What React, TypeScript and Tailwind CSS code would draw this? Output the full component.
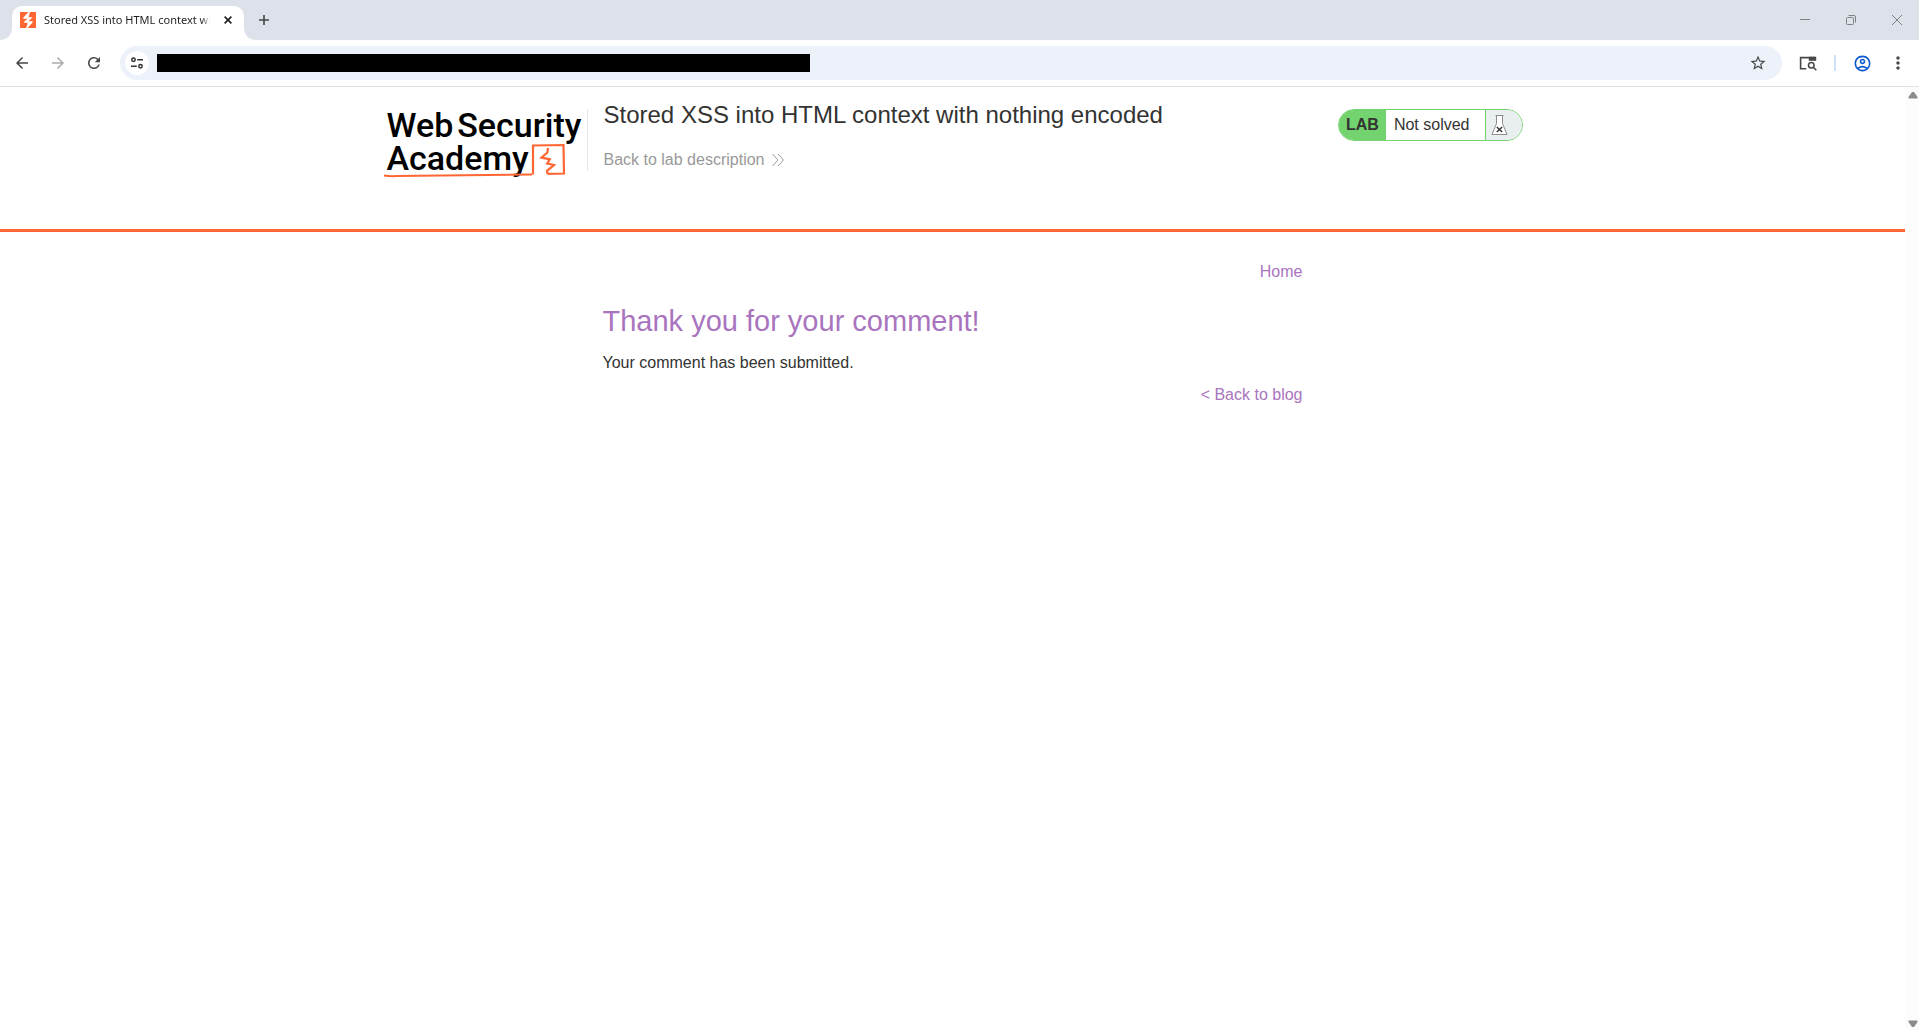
import React from "react";
import { MdArrowBack, MdArrowForward, MdMoreVert, MdOutlineAccountCircle, MdRefresh, MdStarBorder } from "react-icons/md";

function Favicon() {
  return (
    <svg viewBox="0 0 16 16" className="size-4 shrink-0" aria-hidden="true">
      <rect width="16" height="16" fill="#ff6633" />
      <path d="M8.400 0H10L8.600 5.200h4L8.200 9.600 7 8.600 8.800 6.800H3.200V5.800zM7.600 16H6.200l1.600-5L4 10.600V9.800l3.600-3 1 1.200-1.400 1.200h5.400v1.200z" fill="#fff" />
    </svg>
  );
}

function TabStrip() {
  return (
    <header className="flex h-10 shrink-0 items-stretch bg-[#dde1e9]">
      <div className="relative ml-3 mt-1.5 flex w-[232px] items-center rounded-t-[10px] bg-white pl-2">
        <svg viewBox="0 0 12 12" className="absolute -left-3 bottom-0 size-3" aria-hidden="true">
          <path d="M12 0v12H0C7 12 12 7 12 0z" fill="#fff" />
        </svg>
        <svg viewBox="0 0 12 12" className="absolute -right-3 bottom-0 size-3" aria-hidden="true">
          <path d="M0 0v12h12C5 12 0 7 0 0z" fill="#fff" />
        </svg>
        <div className="mb-1.5 flex w-full items-center">
          <Favicon />
          <span className="ml-2 w-[166px] overflow-hidden whitespace-nowrap bg-linear-to-r from-[#1f1f1f] from-95% to-transparent bg-clip-text font-['Noto_Sans','Open_Sans',sans-serif] text-[11px] leading-4 text-transparent">
            Stored XSS into HTML context with nothing encoded
          </span>
          <button aria-label="Close tab" className="ml-2 grid size-5 place-items-center">
            <svg viewBox="0 0 8 8" className="size-2" stroke="#1f1f1f" strokeWidth="1.6" aria-hidden="true">
              <path d="M.6.6l6.8 6.8M7.4.6.6 7.4" />
            </svg>
          </button>
        </div>
      </div>
      <button aria-label="New tab" className="ml-2.5 grid w-5 place-items-center">
        <svg viewBox="0 0 10 10" className="size-2.5" stroke="#444746" strokeWidth="1.6" aria-hidden="true">
          <path d="M5 0v10M0 5h10" />
        </svg>
      </button>
      <div className="-mr-px ml-auto flex">
        <button aria-label="Minimize" className="grid w-[46px] place-items-center">
          <svg viewBox="0 0 10 10" className="size-2.5" stroke="#7d8085" strokeWidth="1" aria-hidden="true">
            <path d="M0 4.5h10" />
          </svg>
        </button>
        <button aria-label="Restore" className="grid w-[46px] place-items-center">
          <svg viewBox="0 0 10 10" className="size-2.5" fill="none" stroke="#7d8085" strokeWidth="1" aria-hidden="true">
            <rect x=".5" y="2.5" width="7" height="7" rx="1" />
            <path d="M2.5.5H8a1.5 1.5 0 0 1 1.5 1.5v5.5" />
          </svg>
        </button>
        <button aria-label="Close window" className="grid w-[46px] place-items-center">
          <svg viewBox="0 0 10 10" className="size-2.5" stroke="#7d8085" strokeWidth="1" aria-hidden="true">
            <path d="M0 0l10 10M10 0 0 10" />
          </svg>
        </button>
      </div>
    </header>
  );
}

function Toolbar() {
  return (
    <nav className="flex h-[47px] shrink-0 items-center border-b border-[#dfe0e2] bg-white pl-1 text-[#474747]">
      <button aria-label="Back" className="grid size-9 place-items-center">
        <MdArrowBack size={18} />
      </button>
      <button aria-label="Forward" className="grid size-9 place-items-center text-[#ababab]">
        <MdArrowForward size={18} />
      </button>
      <button aria-label="Reload" className="grid size-9 place-items-center">
        <MdRefresh size={18} />
      </button>
      <div className="ml-2 flex h-[34px] flex-1 items-center rounded-full bg-[#ecf1fa] pl-[5px]">
        <button aria-label="View site information" className="grid size-6 place-items-center rounded-full bg-white">
          <svg viewBox="0 0 12 12" className="size-3" fill="none" stroke="#303030" strokeWidth="1.5" aria-hidden="true">
            <circle cx="2.5" cy="2.8" r="1.7" />
            <path d="M6.2 2.8H12M0 9.2h5.8" />
            <circle cx="9.5" cy="9.2" r="1.7" />
          </svg>
        </button>
        <input aria-label="Address" readOnly className="ml-2 h-[18px] w-[653px] bg-black text-black outline-none" />
        <button aria-label="Bookmark this tab" className="ml-auto mr-3 grid size-6 place-items-center">
          <MdStarBorder size={18} />
        </button>
      </div>
      <button aria-label="Search side panel" className="ml-3.5 grid size-6 place-items-center">
        <svg viewBox="0 0 18 15" className="h-[15px] w-[18px]" fill="none" stroke="#474747" aria-hidden="true">
          <path d="M7.2 12.8H1.6V1.6h14.6" strokeWidth="1.6" />
          <path d="M9.8.8h7.4v4H9.8z" fill="#474747" stroke="none" />
          <circle cx="12.3" cy="9.3" r="2.8" strokeWidth="1.5" />
          <path d="m14.3 11.3 3 3" strokeWidth="1.6" />
        </svg>
      </button>
      <span className="ml-3.5 h-4 w-0.5 bg-[#d0e2fc]" />
      <button aria-label="Profile" className="ml-3.5 grid size-6 place-items-center text-[#0b57d0]">
        <MdOutlineAccountCircle size={19} />
      </button>
      <button aria-label="Menu" className="ml-3 mr-[9px] grid size-6 place-items-center">
        <MdMoreVert size={20} />
      </button>
    </nav>
  );
}

function Logo() {
  return (
    <a href="#academy" className="relative block h-[62px] w-[205px] shrink-0 border-r border-[#e6e6e6] font-['Roboto',sans-serif] text-[34px] font-medium leading-[33px] text-black">
      <span className="flex gap-1 pl-1">
        <span>Web</span>
        <span>Security</span>
      </span>
      <span className="block pl-1">Academy</span>
      <svg viewBox="0 0 204 75" className="absolute left-0 top-0 h-[75px] w-[204px]" fill="none" stroke="#ff6633" aria-hidden="true">
        <path d="M1 66.500c4 .6 8 .8 12 .6 46-.2 92-1 136-1.600" strokeWidth="2" />
        <path d="M150 65.500 150 36.500l30.500-.5.5 28.500-16 .3" strokeWidth="2.200" />
        <path d="m165 39-.6 4.500-6 5.200 8.400 1.600-2.600 4.200 6.800 1.500-7 5.800.6 3.500" strokeWidth="2.200" />
      </svg>
    </a>
  );
}

function LabBadge() {
  return (
    <div className="ml-auto flex h-8 items-stretch overflow-hidden rounded-full border border-[#73d36f] text-base leading-[30px] text-[#333332]">
      <p className="bg-[#73d36f] px-[7px] font-bold">LAB</p>
      <p className="border-r border-[#73d36f] pl-2 pr-[15px]">Not solved</p>
      <span className="flex w-9 items-center bg-[#e9eef0] pl-[5px]">
        <svg viewBox="0 0 17 20" className="h-5 w-[17px]" fill="#fff" stroke="#8c8c8c" aria-hidden="true">
          <path d="M5.500.5v8L1 19.500h15L11.500 8.500v-8z" />
          <path d="M4.500.5h8" strokeWidth="1.200" />
          <path d="m5.800 12 5.400 5m0-5-5.400 5" stroke="#333" strokeWidth="1.400" />
        </svg>
      </span>
    </div>
  );
}

function LabPage() {
  return (
    <div className="min-w-0 flex-1 bg-white text-[#333332]">
      <section className="h-[145px] border-b-[3px] border-[#ff6633] pt-[22px]">
        <div className="mx-auto flex max-w-[1140px] items-start">
          <Logo />
          <div className="ml-4">
            <h2 className="-mt-2 text-2xl leading-7">Stored XSS into HTML context with nothing encoded</h2>
            <a href="#description" className="mt-[19px] flex items-center gap-2 text-base leading-6 text-[#999999]">
              Back to lab description
              <svg viewBox="0 0 12 12" className="size-3" fill="none" stroke="#999999" strokeWidth="1" aria-hidden="true">
                <path d="m.5 0 5.500 6-5.500 6M6 0l5.500 6L6 12" />
              </svg>
            </a>
          </div>
          <LabBadge />
        </div>
      </section>
      <main className="mx-auto max-w-[700px] pt-7 text-base leading-6">
        <nav className="text-right">
          <a href="#home" className="text-[#a974be]">Home</a>
        </nav>
        <h1 className="mt-[19px] text-[29px] leading-9 text-[#a974be]">Thank you for your comment!</h1>
        <p className="mt-3">Your comment has been submitted.</p>
        <div className="mt-2 text-right">
          <a href="#blog" className="text-[#a974be]">&lt; Back to blog</a>
        </div>
      </main>
    </div>
  );
}

function Scrollbar() {
  return (
    <div className="flex w-3.5 shrink-0 flex-col items-center justify-between bg-[#fcfcfc] pb-0.5 pl-px pt-1" aria-hidden="true">
      <svg viewBox="0 0 10 8" className="h-2 w-2.5">
        <path d="M4 1h2l3.500 5v1.500h-9V6z" fill="#8b8b8b" />
      </svg>
      <svg viewBox="0 0 10 8" className="h-2 w-2.5">
        <path d="M4 7h2l3.500-5V.5h-9V2z" fill="#8b8b8b" />
      </svg>
    </div>
  );
}

export default function App() {
  return (
    <div className="flex h-screen flex-col bg-white font-['Liberation_Sans',Arial,sans-serif]">
      <TabStrip />
      <Toolbar />
      <div className="flex min-h-0 flex-1">
        <LabPage />
        <Scrollbar />
      </div>
    </div>
  );
}
